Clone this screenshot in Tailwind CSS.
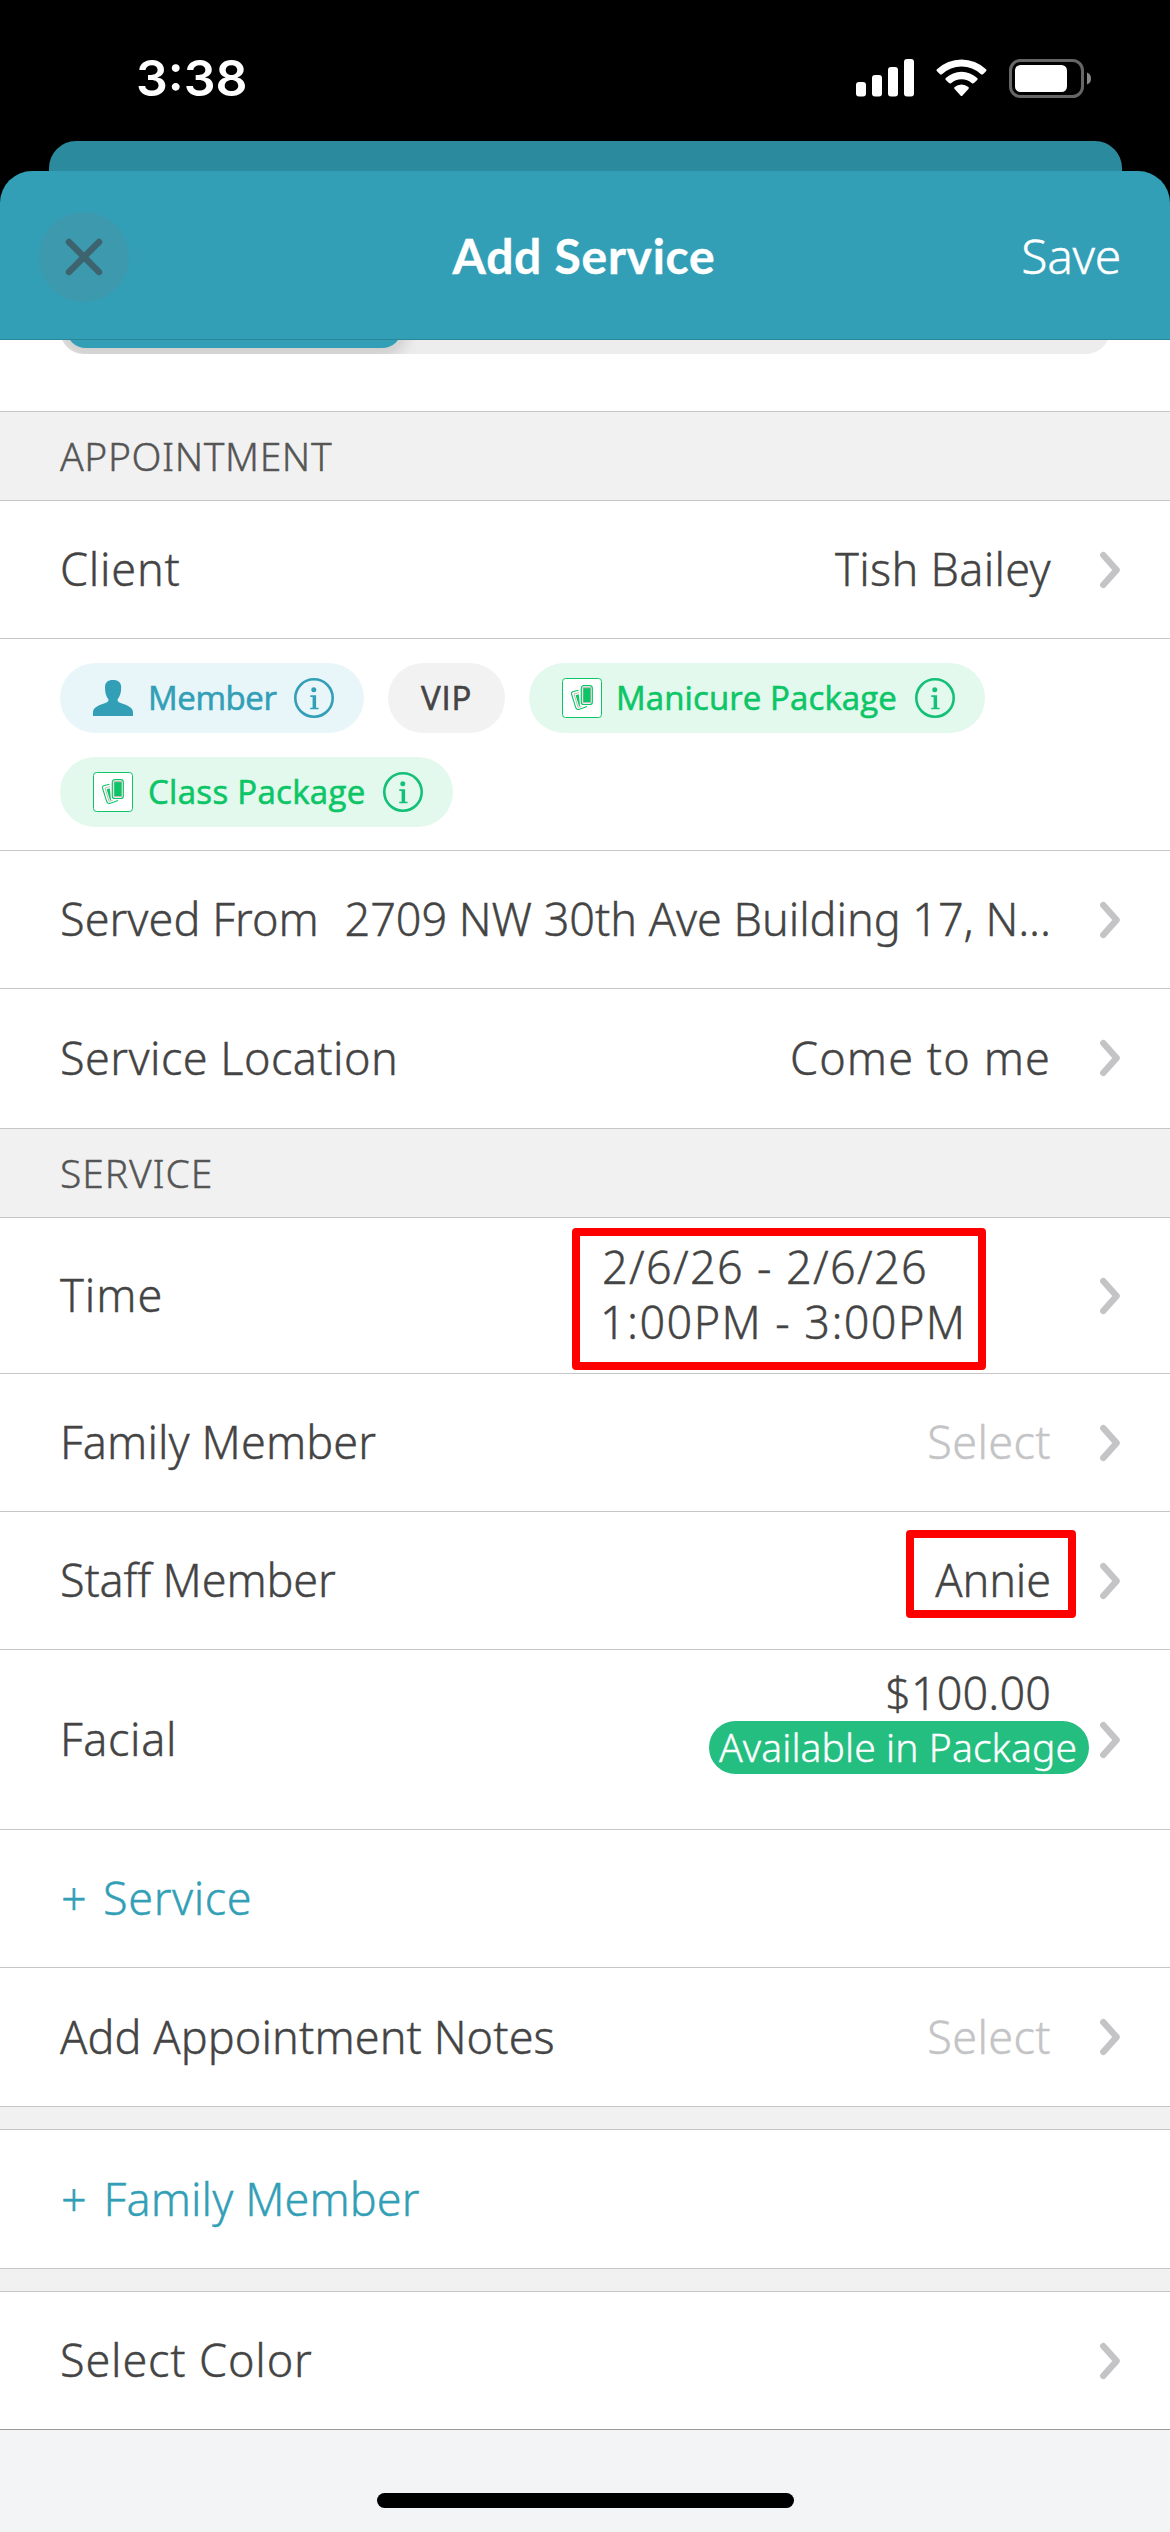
<!DOCTYPE html>
<html lang="en">
<head>
<meta charset="utf-8">
<title>Add Service</title>
<script src="https://cdn.jsdelivr.net/npm/@tailwindcss/browser@4"></script>
</head>
<body class="bg-white">
<svg class="hidden">
  <symbol id="chev" viewBox="0 0 26 40"><path d="M6.300 5.200 L19.600 20 L6.300 34.800" fill="none" stroke="#c4c4c6" stroke-width="6.400" stroke-linecap="round" stroke-linejoin="round"/></symbol>
  <symbol id="info" viewBox="0 0 40 40"><circle cx="20" cy="20" r="18.700" fill="none" stroke="currentColor" stroke-width="2.600"/><circle cx="19.800" cy="11.800" r="2.500" fill="currentColor"/><path d="M16.300 17.300h5.800v12.400h2.500v1.600h-8.400v-1.600h2.400v-10.800h-2.300z" fill="currentColor"/></symbol>
  <symbol id="cards" viewBox="0 0 40 40">
    <rect x=".5" y=".5" width="39" height="39" rx="3" fill="#fff" stroke="#0cc566"/>
    <path d="M16.500 12.200 L10.600 13.800 Q9 14.500 9.500 16 L13.800 29.800 Q14.600 31.800 16.600 31.400 L21 30 L25 28.600" fill="none" stroke="#0cc566" stroke-width="1.100"/>
    <path d="M17 14.600 L12 16 L16 29.300 L19.500 28.400" fill="none" stroke="#c3b7b7" stroke-width="1"/>
    <path d="M13.600 17.200 L16.800 16.200 L18 28 L17 28.200z" fill="#0cc566"/>
    <rect x="19.300" y="7.700" width="11" height="18.800" rx="2.600" fill="#fff" stroke="#0cc566" stroke-width="1.200"/>
    <rect x="20.600" y="9" width="8.600" height="16.200" rx="1.200" fill="#c3b7b7"/>
    <rect x="21.400" y="10.200" width="7" height="13.800" fill="#0cc566"/>
  </symbol>
</svg>

<div class="flex flex-col w-[1170px] h-[2532px] overflow-hidden bg-white font-['Noto_Sans',sans-serif] font-light text-[45px] leading-[55px] text-[#444] whitespace-nowrap [-webkit-text-stroke:0.4px]">

  <div class="bg-black">
    <!-- status bar -->
    <div class="h-[141px] pt-[15px] pl-[136px] pr-[79px] flex items-center justify-between text-white">
      <div class="font-['Inter',sans-serif] font-semibold text-[50px] [-webkit-text-stroke:0px]">3:38</div>
      <div class="flex items-center">
        <svg class="w-[58px] h-[38px]" viewBox="0 0 58 38" fill="#fff"><rect y="23" width="10" height="14.500" rx="3"/><rect x="16" y="16" width="10" height="21.500" rx="3"/><rect x="32" y="8" width="10" height="29.500" rx="3"/><rect x="48" width="10" height="37.500" rx="3"/></svg>
        <svg class="w-[51px] h-[38px] ml-[22px]" viewBox="0 0 51 38" fill="#fff"><path d="M1 10.200 A35.500 35.500 0 0 1 50 10.200 Q51 11.300 50 12.300 L47 15.200 Q46 16 45 15.200 A28.500 28.500 0 0 0 6 15.200 Q5 16 4 15.200 L1 12.300 Q0 11.300 1 10.200z"/><path d="M9.800 19 A23 23 0 0 1 41.200 19 Q42.200 20.100 41.200 21 L38 24.100 Q37 25 36 24.200 A16 16 0 0 0 15 24.200 Q14 25 13 24.100 L9.800 21 Q8.800 20.100 9.800 19z"/><path d="M18.600 28 A10.600 10.600 0 0 1 32.400 28 Q33.400 28.900 32.400 29.900 L26.500 36.400 Q25.500 37.400 24.500 36.400 L18.600 29.900 Q17.600 28.900 18.600 28z"/></svg>
        <svg class="w-[82px] h-[39px] ml-[22px]" viewBox="0 0 82 39"><rect x="1.500" y="1.500" width="72" height="36" rx="10" fill="none" stroke="#666" stroke-width="3"/><rect x="6" y="6" width="52" height="27" rx="5.500" fill="#fff"/><path d="M78 13.500 Q82 15 82 19.500 Q82 24 78 25.500z" fill="#888"/></svg>
      </div>
    </div>
    <!-- sheet behind -->
    <div class="h-[30px] mx-[48.500px] rounded-t-[27px] bg-[#2c8a9e]"></div>
    <!-- sheet header -->
    <div class="h-[169px] rounded-t-[32px] bg-[#329fb7] border-b border-[#2a8699] pl-[39px] pr-[50px] grid grid-cols-[1fr_auto_1fr] items-center text-[48px] text-white">
      <div class="mt-[3px] size-[90px] rounded-full bg-[#3c99ae] flex items-center justify-center">
        <svg class="size-[38px]" viewBox="0 0 38 38"><path d="M4 4 L34 34 M34 4 L4 34" stroke="#3d636f" stroke-width="6.500" stroke-linecap="round"/></svg>
      </div>
      <div class="font-['Lato',sans-serif] font-bold tracking-[0.750px] pl-[9px] pt-px">Add Service</div>
      <div class="text-right tracking-[-0.300px] pt-px -mr-px">Save</div>
    </div>
  </div>

  <!-- segmented control, scrolled under the header -->
  <div class="h-[72px] shrink-0 border-b border-[#c6c6c8] overflow-hidden">
    <div class="-mt-[46px] h-[60px] mx-[60px] rounded-[24px] bg-[#ededed] overflow-hidden">
      <div class="ml-[6px] w-[336px] h-[54px] rounded-[20px] bg-[#329fb7] shadow-[0_4px_14px_6px_rgba(0,0,0,0.130)]"></div>
    </div>
  </div>

  <div class="h-[89px] shrink-0 border-b border-[#c6c6c8] bg-[#f1f1f1] pl-[60px] flex items-center text-[39px] text-[#555] tracking-[0.600px]"><span class="pb-px">APPOINTMENT</span></div>

  <div class="h-[138px] shrink-0 border-b border-[#c6c6c8] pl-[60px] pr-[47px] flex items-center">
    <span class="flex-1 pb-[2px] tracking-[0.770px]">Client</span><span class="pb-[2px] tracking-[0.300px]">Tish Bailey</span><svg class="ml-[46px] w-[26px] h-[40px]"><use href="#chev"/></svg>
  </div>

  <!-- client tags -->
  <div class="h-[212px] shrink-0 border-b border-[#c6c6c8] pl-[60px] pt-[24px] flex flex-wrap content-start gap-x-[24px] gap-y-[24px] font-['Open_Sans',sans-serif] font-normal text-[33px] [-webkit-text-stroke:0.6px]">
    <div class="h-[70px] w-[304px] rounded-full bg-[#e8f6fa] text-[#329fb7] pl-[33px] flex items-center">
      <svg class="size-[40px]" viewBox="0 0 40 40" fill="currentColor"><path d="M20 2 C25.500 2 28.200 4.500 28.200 9.500 C28.200 14.500 27 18.500 24.500 21.500 C24.500 23.800 26 24.600 29 25.400 C35 27.200 40 30 40 34 L40 38 L0 38 L0 34 C0 30 5 27.200 11 25.400 C14 24.600 15.500 23.800 15.500 21.500 C13 18.500 12 14.500 12 9.500 C12 4.500 14.500 2 20 2z"/></svg>
      <span class="ml-[15px] w-[146px] pb-px tracking-[-0.400px]">Member</span><svg class="size-[40px]"><use href="#info"/></svg>
    </div>
    <div class="h-[70px] w-[117px] rounded-full bg-[#f2f2f2] flex items-center justify-center tracking-[0.800px]"><span class="pb-px">VIP</span></div>
    <div class="h-[70px] w-[456px] rounded-full bg-[#e3f9ed] text-[#0cc566] pl-[33px] flex items-center">
      <svg class="size-[40px]"><use href="#cards"/></svg>
      <span class="ml-[14px] w-[299px] pb-px tracking-[0.100px]">Manicure Package</span><svg class="size-[40px] text-[#14c078]"><use href="#info"/></svg>
    </div>
    <div class="h-[70px] w-[393px] rounded-full bg-[#e3f9ed] text-[#0cc566] pl-[33px] flex items-center">
      <svg class="size-[40px]"><use href="#cards"/></svg>
      <span class="ml-[15px] w-[235px] pb-px tracking-[0.300px]">Class Package</span><svg class="size-[40px] text-[#14c078]"><use href="#info"/></svg>
    </div>
  </div>

  <div class="h-[138px] shrink-0 border-b border-[#c6c6c8] pl-[60px] pr-[47px] flex items-center">
    <span class="flex-1 pb-[2px] tracking-[0.060px]">Served From</span><span class="pb-[2px] tracking-[-0.040px]">2709 NW 30th Ave Building 17, N...</span><svg class="ml-[46px] w-[26px] h-[40px]"><use href="#chev"/></svg>
  </div>
  <div class="h-[140px] shrink-0 border-b border-[#c6c6c8] pl-[60px] pr-[47px] pb-px flex items-center">
    <span class="flex-1 pb-[2px] tracking-[0.450px]">Service Location</span><span class="pb-[2px] tracking-[1.100px]">Come to me</span><svg class="ml-[46px] w-[26px] h-[40px]"><use href="#chev"/></svg>
  </div>

  <div class="h-[89px] shrink-0 border-b border-[#c6c6c8] bg-[#f1f1f1] pl-[60px] flex items-center text-[39px] text-[#555] tracking-[0.900px]"><span class="pb-px">SERVICE</span></div>

  <div class="relative h-[156px] shrink-0 border-b border-[#c6c6c8] pl-[60px] pr-[47px] flex items-center">
    <span class="flex-1 pb-[2px] tracking-[0.960px]">Time</span>
    <div class="self-start pt-[21px] w-[449px]"><div class="tracking-[1.340px]">2/6/26 - 2/6/26</div><div class="-ml-[2px] tracking-[1.400px]">1:00PM - 3:00PM</div></div>
    <svg class="ml-[46px] w-[26px] h-[40px]"><use href="#chev"/></svg>
    <div class="absolute left-[572px] top-[10px] w-[414px] h-[142px] rounded-[4px] border-8 border-[#ff0000]"></div>
  </div>
  <div class="h-[138px] shrink-0 border-b border-[#c6c6c8] pl-[60px] pr-[47px] flex items-center">
    <span class="flex-1 pb-[2px] tracking-[0.100px]">Family Member</span><span class="pb-[2px] tracking-[0.370px] text-[#c4c4c6]">Select</span><svg class="ml-[46px] w-[26px] h-[40px]"><use href="#chev"/></svg>
  </div>
  <div class="relative h-[138px] shrink-0 border-b border-[#c6c6c8] pl-[60px] pr-[47px] flex items-center">
    <span class="flex-1 pb-[2px] tracking-[-0.150px]">Staff Member</span><span class="pb-[2px] tracking-[-0.100px]">Annie</span><svg class="ml-[46px] w-[26px] h-[40px]"><use href="#chev"/></svg>
    <div class="absolute left-[906px] top-[18px] w-[170px] h-[88px] rounded-[4px] border-8 border-[#ff0000]"></div>
  </div>
  <div class="h-[180px] shrink-0 border-b border-[#c6c6c8] pl-[60px] pr-[47px] flex items-center">
    <span class="flex-1 pb-[2px] tracking-[0.600px]">Facial</span>
    <div class="self-start pt-[15px] flex flex-col items-end">
      <span class="tracking-[0.100px]">$100.00</span>
      <div class="mt-px -mr-[38px] w-[380px] h-[53px] rounded-full bg-[#24be80] flex items-center pl-[10px] text-[39px] text-white tracking-[0.100px]"><span class="pb-[3px]">Available in Package</span></div>
    </div>
    <svg class="ml-[46px] w-[26px] h-[40px]"><use href="#chev"/></svg>
  </div>
  <div class="h-[138px] shrink-0 border-b border-[#c6c6c8] pl-[61px] flex items-center text-[#329fb7]"><span class="pb-[2px] tracking-[0.600px] [word-spacing:3.5px]">+ Service</span></div>
  <div class="h-[139px] shrink-0 border-b border-[#c6c6c8] pl-[60px] pr-[47px] flex items-center">
    <span class="flex-1 pb-[2px] tracking-[0.090px]">Add Appointment Notes</span><span class="pb-[2px] tracking-[0.370px] text-[#c4c4c6]">Select</span><svg class="ml-[46px] w-[26px] h-[40px]"><use href="#chev"/></svg>
  </div>
  <div class="h-[23px] shrink-0 border-b border-[#c6c6c8] bg-[#f1f1f1]"></div>
  <div class="h-[139px] shrink-0 border-b border-[#c6c6c8] pl-[61px] flex items-center text-[#329fb7]"><span class="pb-[2px] tracking-[0.100px]">+<span class="ml-[5px]"> Family Member</span></span></div>
  <div class="h-[23px] shrink-0 border-b border-[#c6c6c8] bg-[#f1f1f1]"></div>
  <div class="h-[138px] shrink-0 border-b border-[#999] pl-[60px] pr-[47px] flex items-center">
    <span class="flex-1 pb-[2px] tracking-[0.840px]">Select Color</span><svg class="w-[26px] h-[40px]"><use href="#chev"/></svg>
  </div>

  <!-- home indicator -->
  <div class="flex-1 bg-[#f3f4f6] flex justify-center items-end pb-[24px]"><div class="w-[417px] h-[15px] rounded-full bg-black"></div></div>
</div>
</body>
</html>
